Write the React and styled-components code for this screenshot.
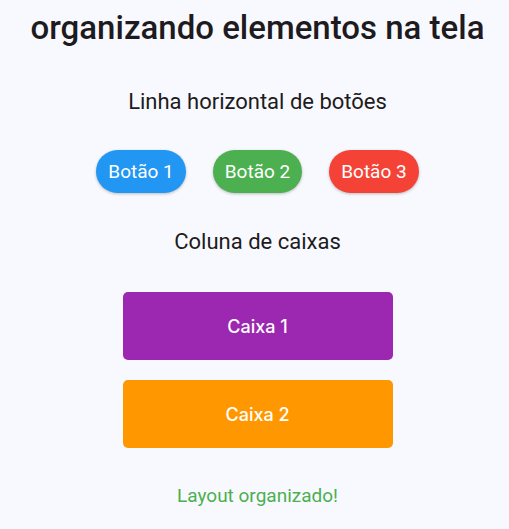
import React from "react";
import styled, { createGlobalStyle } from "styled-components";

const GlobalStyle = createGlobalStyle`
  html, body {
    margin: 0;
    padding: 0;
    background: #f8f9fe;
    font-family: Roboto, "Noto Sans", sans-serif;
  }
`;

const Page = styled.div`
  box-sizing: border-box;
  width: 509px;
  min-height: 529px;
  padding-left: 6px;
  display: flex;
  flex-direction: column;
  align-items: center;
  color: #1d1b20;
`;

const Title = styled.h1`
  margin: 8px 0 0;
  font-size: 33px;
  font-weight: 500;
  line-height: 40px;
`;

const Subtitle = styled.h2`
  margin: ${(p) => p.$top || 0}px 0 0;
  font-size: 22px;
  font-weight: 400;
  line-height: 28px;
`;

const ButtonRow = styled.div`
  display: flex;
  gap: 27px;
  margin-top: 34px;
`;

const Pill = styled.button`
  height: 43px;
  padding: 0 12px;
  border: none;
  border-radius: 22px;
  background: ${(p) => p.$bg};
  color: #fff;
  font-family: Roboto, sans-serif;
  font-size: 19px;
  box-shadow: 0 1px 3px rgba(0, 0, 0, 0.25);
`;

const BoxColumn = styled.div`
  display: flex;
  flex-direction: column;
  gap: 20px;
  margin-top: 36px;
`;

const Box = styled.div`
  width: 270px;
  height: 68px;
  border-radius: 5px;
  background: ${(p) => p.$bg};
  color: #fff;
  display: flex;
  align-items: center;
  justify-content: center;
  font-family: Inter, Roboto, sans-serif;
  font-size: 18px;
  font-weight: 500;
`;

const Footer = styled.p`
  margin: 36px 0 0;
  color: #4caf50;
  font-size: 19px;
  line-height: 24px;
`;

const buttons = [
  { label: "Botão 1", color: "#2196f3" },
  { label: "Botão 2", color: "#4caf50" },
  { label: "Botão 3", color: "#f44336" },
];

const boxes = [
  { label: "Caixa 1", color: "#9c27b0" },
  { label: "Caixa 2", color: "#ff9800" },
];

export default function App() {
  return (
    <>
      <GlobalStyle />
      <Page>
        <Title>organizando elementos na tela</Title>
        <Subtitle $top={40}>Linha horizontal de botões</Subtitle>
        <ButtonRow>
          {buttons.map((b) => (
            <Pill key={b.label} $bg={b.color}>{b.label}</Pill>
          ))}
        </ButtonRow>
        <Subtitle $top={35}>Coluna de caixas</Subtitle>
        <BoxColumn>
          {boxes.map((b) => (
            <Box key={b.label} $bg={b.color}>{b.label}</Box>
          ))}
        </BoxColumn>
        <Footer>Layout organizado!</Footer>
      </Page>
    </>
  );
}
